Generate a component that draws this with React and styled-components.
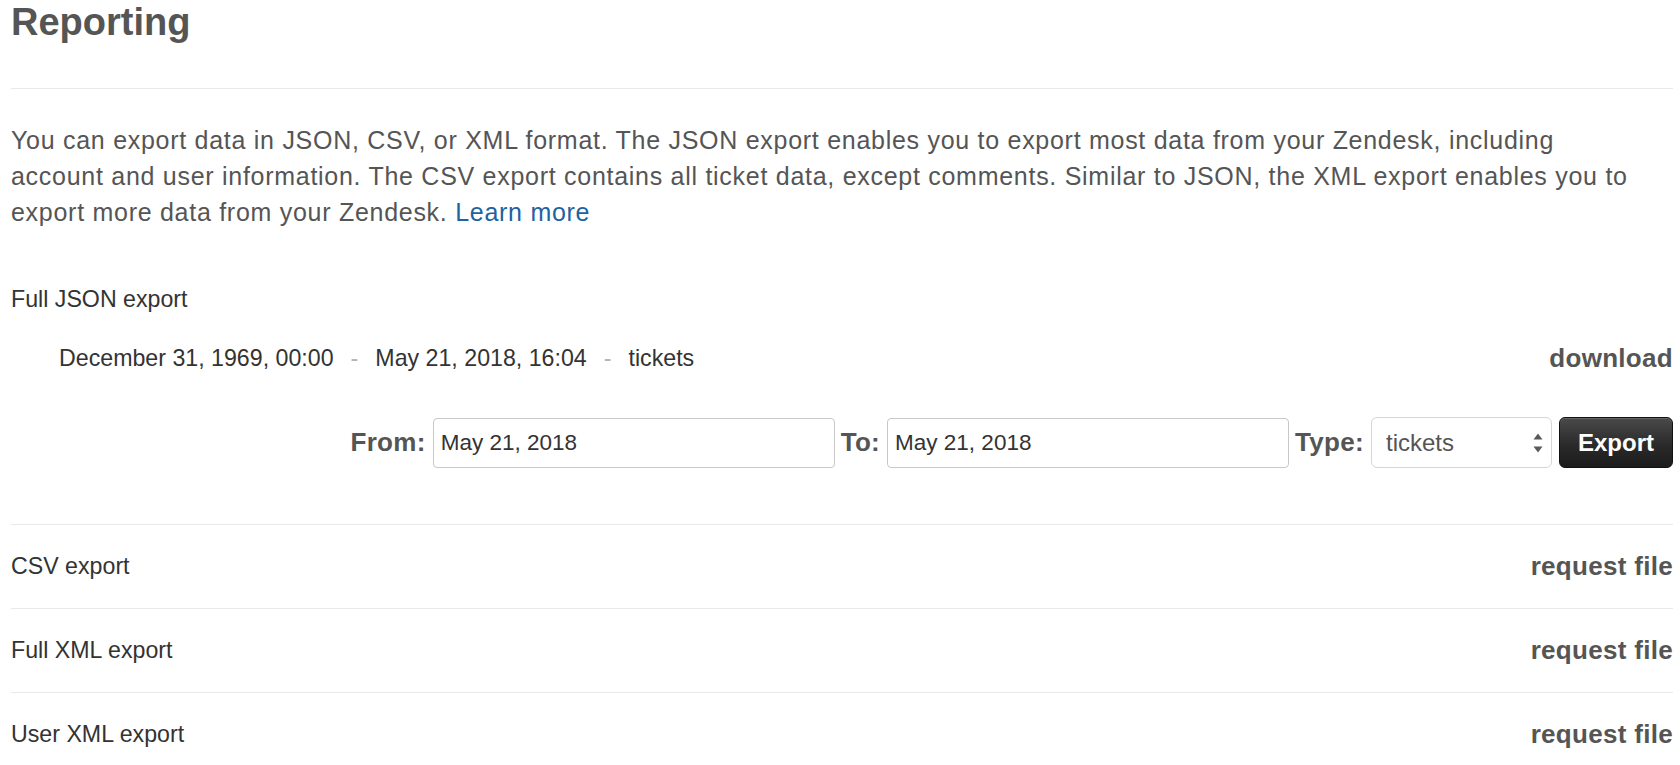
import React from "react";
import styled, { createGlobalStyle } from "styled-components";

const GlobalStyle = createGlobalStyle`
  html, body {
    margin: 0;
    padding: 0;
    background: #ffffff;
  }
  body {
    font-family: "Liberation Sans", Arial, Helvetica, sans-serif;
    color: #555555;
    -webkit-font-smoothing: antialiased;
  }
`;

const Page = styled.div`
  padding: 0 7px 0 11px;
`;

const Title = styled.h1`
  margin: 0;
  padding-bottom: 44px;
  font-size: 38px;
  line-height: 44px;
  font-weight: 700;
  color: #555555;
  border-bottom: 1px solid #e9e9e9;
`;

const Intro = styled.p`
  margin: 33px 0 0;
  font-size: 25px;
  line-height: 36px;
  letter-spacing: 0.72px;
  color: #555555;
  white-space: nowrap;
`;

const Link = styled.a`
  color: #1e62a0;
  text-decoration: none;
`;

const Section = styled.section`
  padding-bottom: 56px;
  border-bottom: 1px solid #e9e9e9;
`;

const SectionLabel = styled.div`
  margin-top: 54px;
  font-size: 23.2px;
  line-height: 30px;
  color: #333333;
`;

const ItemRow = styled.div`
  display: flex;
  align-items: center;
  justify-content: space-between;
  height: 40px;
  margin-top: 24px;
  padding-left: 48px;
`;

const ItemMeta = styled.div`
  display: flex;
  align-items: center;
  font-size: 23.2px;
  color: #333333;
`;

const Sep = styled.span`
  color: #b5b5b5;
  margin: 0 17px;
`;

const Action = styled.a`
  font-size: 26px;
  font-weight: 700;
  letter-spacing: 0.3px;
  color: #555555;
  text-decoration: none;
  cursor: pointer;
`;

const FormRow = styled.form`
  display: flex;
  align-items: center;
  justify-content: flex-end;
  height: 51px;
  margin-top: 39px;
`;

const Label = styled.label`
  font-size: 26px;
  font-weight: 700;
  letter-spacing: 0.3px;
  color: #555555;
  margin: 0 7px 0 ${(p) => p.$gap}px;
`;

const TextInput = styled.input`
  box-sizing: border-box;
  width: ${(p) => p.$width}px;
  height: 50px;
  padding: 0 7px;
  border: 1px solid #c8c8c8;
  border-radius: 4px;
  font-family: "Liberation Sans", Arial, sans-serif;
  font-size: 22.5px;
  color: #333333;
  background: #ffffff;
  outline: none;
`;

const SelectWrap = styled.div`
  position: relative;
  width: 181px;
  height: 51px;
`;

const Select = styled.select`
  box-sizing: border-box;
  width: 100%;
  height: 100%;
  padding: 0 30px 0 14px;
  border: 1px solid #d6d6d6;
  border-radius: 6px;
  background: #ffffff;
  font-family: "Liberation Sans", Arial, sans-serif;
  font-size: 24px;
  color: #555555;
  appearance: none;
  -webkit-appearance: none;
  outline: none;
`;

const Arrows = styled.svg`
  position: absolute;
  right: 9px;
  top: 50%;
  transform: translateY(-50%);
  pointer-events: none;
`;

const ExportButton = styled.button`
  box-sizing: border-box;
  margin-left: 7px;
  width: 114px;
  height: 51px;
  border: 1px solid #111111;
  border-radius: 6px;
  background: linear-gradient(#4a4a4a, #2a2a2a 55%, #1c1c1c);
  box-shadow: inset 0 1px 0 rgba(255, 255, 255, 0.15);
  color: #ffffff;
  font-family: "Liberation Sans", Arial, sans-serif;
  font-size: 24px;
  font-weight: 700;
  cursor: pointer;
`;

const ExportRow = styled.div`
  display: flex;
  align-items: center;
  justify-content: space-between;
  height: 83px;
  border-bottom: 1px solid #e9e9e9;
`;

const RowLabel = styled.span`
  font-size: 23.2px;
  color: #333333;
`;

const rows = ["CSV export", "Full XML export", "User XML export"];

export default function App() {
  return (
    <>
      <GlobalStyle />
      <Page>
        <Title>Reporting</Title>
        <Intro>
          You can export data in JSON, CSV, or XML format. The JSON export enables you to export most data from your Zendesk, including
          <br />
          account and user information. The CSV export contains all ticket data, except comments. Similar to JSON, the XML export enables you to
          <br />
          export more data from your Zendesk. <Link href="#">Learn more</Link>
        </Intro>

        <Section>
          <SectionLabel>Full JSON export</SectionLabel>
          <ItemRow>
            <ItemMeta>
              <span>December 31, 1969, 00:00</span>
              <Sep>-</Sep>
              <span>May 21, 2018, 16:04</span>
              <Sep>-</Sep>
              <span>tickets</span>
            </ItemMeta>
            <Action>download</Action>
          </ItemRow>
          <FormRow onSubmit={(e) => e.preventDefault()}>
            <Label $gap={0}>From:</Label>
            <TextInput $width={402} readOnly value="May 21, 2018" />
            <Label $gap={6}>To:</Label>
            <TextInput $width={402} readOnly value="May 21, 2018" />
            <Label $gap={6}>Type:</Label>
            <SelectWrap>
              <Select defaultValue="tickets">
                <option value="tickets">tickets</option>
                <option value="users">users</option>
                <option value="organizations">organizations</option>
              </Select>
              <Arrows width="10" height="19" viewBox="0 0 10 19">
                <path d="M5 0 L9.5 6 L0.5 6 Z" fill="#5a5a5a" />
                <path d="M5 19 L9.5 13 L0.5 13 Z" fill="#5a5a5a" />
              </Arrows>
            </SelectWrap>
            <ExportButton type="submit">Export</ExportButton>
          </FormRow>
        </Section>

        {rows.map((r) => (
          <ExportRow key={r}>
            <RowLabel>{r}</RowLabel>
            <Action>request file</Action>
          </ExportRow>
        ))}
      </Page>
    </>
  );
}
